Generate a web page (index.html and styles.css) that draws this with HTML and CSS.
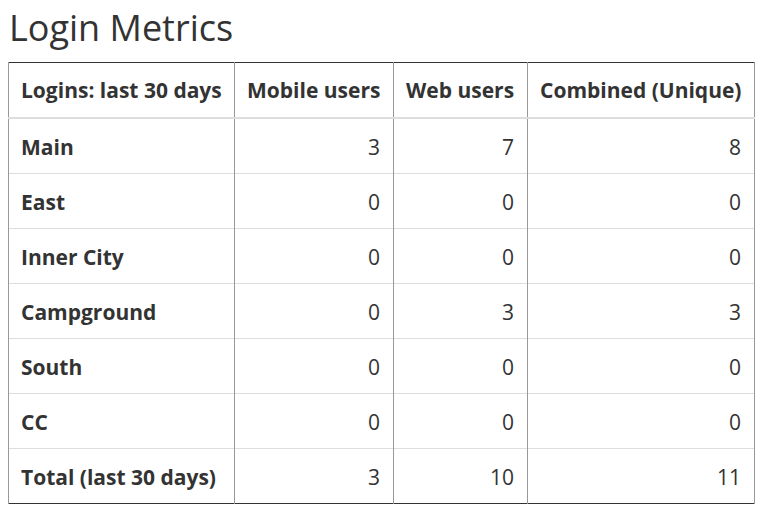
FILE: index.html
```html
<!DOCTYPE html>
<html>
<head>
<meta charset="utf-8">
<link rel="stylesheet" href="styles.css">
</head>
<body>
<h2 class="title">Login Metrics</h2>
<table class="metrics">
  <colgroup>
    <col class="c1"><col class="c2"><col class="c3"><col class="c4">
  </colgroup>
  <thead>
    <tr><th>Logins: last 30 days</th><th>Mobile users</th><th>Web users</th><th>Combined (Unique)</th></tr>
  </thead>
  <tbody>
    <tr><th>Main</th><td>3</td><td>7</td><td>8</td></tr>
    <tr><th>East</th><td>0</td><td>0</td><td>0</td></tr>
    <tr><th>Inner City</th><td>0</td><td>0</td><td>0</td></tr>
    <tr><th>Campground</th><td>0</td><td>3</td><td>3</td></tr>
    <tr><th>South</th><td>0</td><td>0</td><td>0</td></tr>
    <tr><th>CC</th><td>0</td><td>0</td><td>0</td></tr>
    <tr><th>Total (last 30 days)</th><td>3</td><td>10</td><td>11</td></tr>
  </tbody>
</table>
</body>
</html>
```
FILE: styles.css
```css
html, body {
  margin: 0;
  padding: 0;
  background: #ffffff;
}
body {
  font-family: "Open Sans", "Liberation Sans", sans-serif;
  color: #333333;
  padding: 0 8px;
}
.title {
  font-weight: 400;
  font-size: 36px;
  line-height: 40px;
  margin: 8px 0 14px 1px;
  color: #333333;
}
.metrics {
  border-collapse: collapse;
  table-layout: fixed;
  width: 746px;
  border: 1px solid #333333;
  font-size: 21px;
}
.c1 { width: 226px; }
.c2 { width: 159px; }
.c3 { width: 134px; }
.c4 { width: 227px; }
.metrics th, .metrics td {
  padding: 14px 13px 12px 12px;
  line-height: 28px;
  border-top: 1px solid #dddddd;
  border-left: 1px solid #999999;
  border-right: 1px solid #999999;
}
.metrics th {
  font-weight: 700;
  text-align: left;
  white-space: nowrap;
}
.metrics td {
  text-align: right;
  font-weight: 400;
}
.metrics thead th {
  padding-top: 13px;
  padding-bottom: 13px;
  border-top: none;
  border-bottom: 2px solid #dddddd;
}
```
